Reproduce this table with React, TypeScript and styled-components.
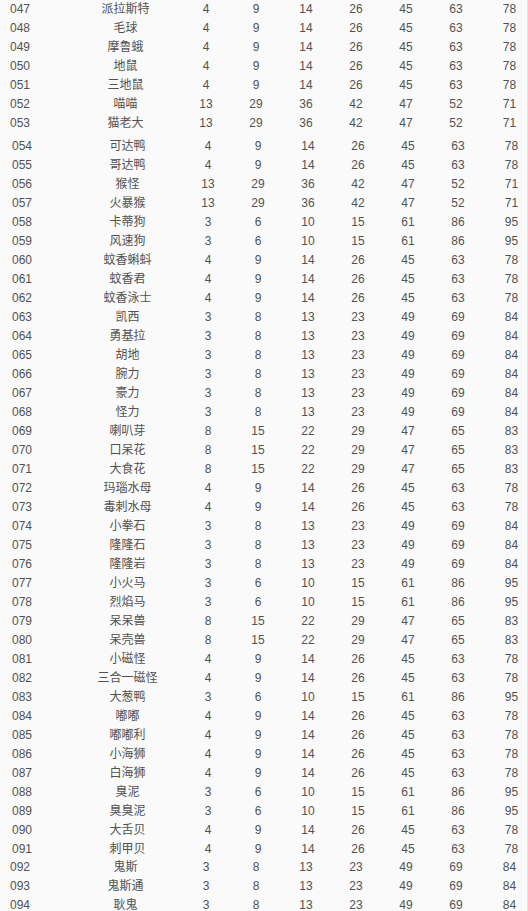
import { createGlobalStyle, styled } from 'styled-components';

const GlobalStyle = createGlobalStyle`
  html, body {
    margin: 0;
    padding: 0;
    background: #fafafa;
  }
  body {
    font-family: 'Liberation Sans', 'Noto Sans CJK SC', sans-serif;
    font-size: 12px;
    color: #525252;
  }
`;

// each block is one scanned piece of the original table, slightly offset
const blocks = [
  {
    shift: 0,
    gap: 0,
    rows: [
      '047 派拉斯特 4 9 14 26 45 63 78',
      '048 毛球 4 9 14 26 45 63 78',
      '049 摩鲁蛾 4 9 14 26 45 63 78',
      '050 地鼠 4 9 14 26 45 63 78',
      '051 三地鼠 4 9 14 26 45 63 78',
      '052 喵喵 13 29 36 42 47 52 71',
      '053 猫老大 13 29 36 42 47 52 71',
    ],
  },
  {
    shift: 2,
    gap: 4,
    rows: [
      '054 可达鸭 4 9 14 26 45 63 78',
      '055 哥达鸭 4 9 14 26 45 63 78',
      '056 猴怪 13 29 36 42 47 52 71',
      '057 火暴猴 13 29 36 42 47 52 71',
      '058 卡蒂狗 3 6 10 15 61 86 95',
      '059 风速狗 3 6 10 15 61 86 95',
      '060 蚊香蝌蚪 4 9 14 26 45 63 78',
      '061 蚊香君 4 9 14 26 45 63 78',
      '062 蚊香泳士 4 9 14 26 45 63 78',
      '063 凯西 3 8 13 23 49 69 84',
      '064 勇基拉 3 8 13 23 49 69 84',
      '065 胡地 3 8 13 23 49 69 84',
      '066 腕力 3 8 13 23 49 69 84',
      '067 豪力 3 8 13 23 49 69 84',
      '068 怪力 3 8 13 23 49 69 84',
      '069 喇叭芽 8 15 22 29 47 65 83',
      '070 口呆花 8 15 22 29 47 65 83',
      '071 大食花 8 15 22 29 47 65 83',
      '072 玛瑙水母 4 9 14 26 45 63 78',
      '073 毒刺水母 4 9 14 26 45 63 78',
      '074 小拳石 3 8 13 23 49 69 84',
      '075 隆隆石 3 8 13 23 49 69 84',
      '076 隆隆岩 3 8 13 23 49 69 84',
      '077 小火马 3 6 10 15 61 86 95',
      '078 烈焰马 3 6 10 15 61 86 95',
      '079 呆呆兽 8 15 22 29 47 65 83',
      '080 呆壳兽 8 15 22 29 47 65 83',
      '081 小磁怪 4 9 14 26 45 63 78',
      '082 三合一磁怪 4 9 14 26 45 63 78',
      '083 大葱鸭 3 6 10 15 61 86 95',
      '084 嘟嘟 4 9 14 26 45 63 78',
      '085 嘟嘟利 4 9 14 26 45 63 78',
      '086 小海狮 4 9 14 26 45 63 78',
      '087 白海狮 4 9 14 26 45 63 78',
      '088 臭泥 3 6 10 15 61 86 95',
      '089 臭臭泥 3 6 10 15 61 86 95',
      '090 大舌贝 4 9 14 26 45 63 78',
      '091 刺甲贝 4 9 14 26 45 63 78',
    ],
  },
  {
    shift: -1,
    gap: -1,
    rows: [
      '092 鬼斯 3 8 13 23 49 69 84',
      '093 鬼斯通 3 8 13 23 49 69 84',
      '094 耿鬼 3 8 13 23 49 69 84',
    ],
  },
];

function App() {
  return (
    <>
      <GlobalStyle />
      <StPage>
        {blocks.map((block, i) => (
          <StBlock key={i} $shift={block.shift} $gap={block.gap}>
            {block.rows.map((line) => {
              const [id, name, ...stats] = line.split(' ');
              return (
                <StRow key={id}>
                  <StId>{id}</StId>
                  <StName>{name}</StName>
                  {stats.map((v, j) => (
                    <StNum key={j} $last={j === stats.length - 1}>
                      {v}
                    </StNum>
                  ))}
                </StRow>
              );
            })}
          </StBlock>
        ))}
      </StPage>
    </>
  );
}

export default App;

const StPage = styled.div`
  width: 527px;
  height: 911px;
  overflow: hidden;
  border-right: 1px solid #e4e4e4;
  background: #fafafa;
`;

const StBlock = styled.div<{ $shift: number; $gap: number }>`
  margin-top: ${(p) => p.$gap}px;
  padding-left: ${(p) => p.$shift}px;
`;

const StRow = styled.div`
  display: grid;
  grid-template-columns: 70px 111px repeat(6, 50px) 47px;
  height: 19px;
  line-height: 19px;
  white-space: nowrap;
`;

const StId = styled.span`
  padding-left: 10px;
`;

const StName = styled.span`
  text-align: center;
`;

const StNum = styled.span<{ $last?: boolean }>`
  text-align: center;
  padding-left: ${(p) => (p.$last ? '10px' : '0')};
`;
